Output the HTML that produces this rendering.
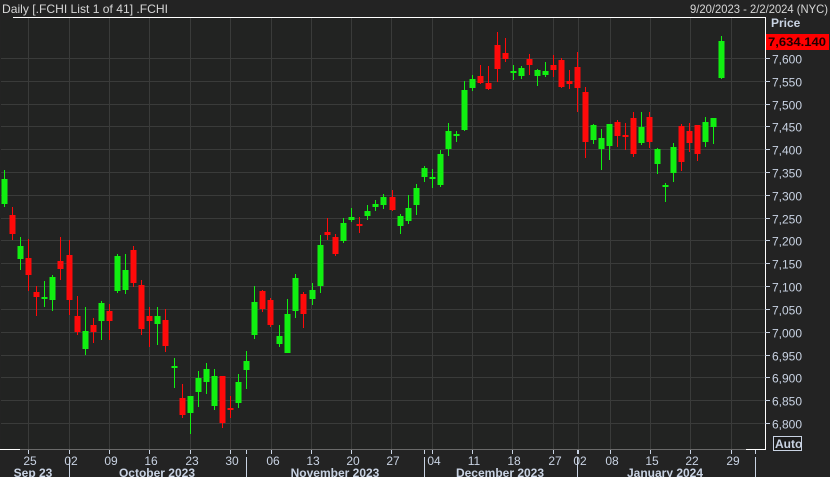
<!DOCTYPE html>
<html><head><meta charset="utf-8"><style>
html,body{margin:0;padding:0;background:#232323;width:830px;height:477px;overflow:hidden}
svg{display:block}
text{font-family:"Liberation Sans",sans-serif}
</style></head><body>
<svg id="s" width="830" height="477" xmlns="http://www.w3.org/2000/svg">
<rect x="0" y="0" width="830" height="477" fill="#232323"/>
<rect x="1" y="18" width="764" height="431" fill="#222322"/>
<g id="grid" stroke="#3a3b3a" stroke-width="1"></g>
<line x1="0" y1="449.5" x2="766" y2="449.5" stroke="#6a6a6a"/>
<line x1="13" y1="17.5" x2="766" y2="17.5" stroke="#ffffff"/>
<line x1="765.5" y1="17" x2="765.5" y2="450" stroke="#ffffff"/>
<line x1="0" y1="449.5" x2="20" y2="449.5" stroke="#ffffff"/>
<line x1="746" y1="449.5" x2="766" y2="449.5" stroke="#ffffff"/>
<g id="c"></g>
<g id="ax" fill="#c9d3e3" font-size="12"></g>
<text x="2" y="13" fill="#d6d6d6" font-size="12" textLength="166" lengthAdjust="spacingAndGlyphs">Daily [.FCHI List 1 of 41] .FCHI</text>
<text x="828" y="13" fill="#d6d6d6" font-size="12" text-anchor="end" textLength="138" lengthAdjust="spacingAndGlyphs">9/20/2023 - 2/2/2024 (NYC)</text>
<text x="771" y="27" fill="#c9d3e3" font-size="12" font-weight="bold">Price</text>
<rect x="766" y="34" width="63" height="16" fill="#ff0000"/>
<text x="768" y="46" fill="#200000" font-size="12" font-weight="bold" textLength="58" lengthAdjust="spacingAndGlyphs">7,634.140</text>
<rect x="773.5" y="436.5" width="28" height="14" fill="#1c1c1c" stroke="#c9d3e3"/>
<text x="775" y="448" fill="#c9d3e3" font-size="12" font-weight="bold">Auto</text>
</svg>
<script>
var ns="http://www.w3.org/2000/svg",s=document.getElementById('s');
function el(p,t,a,txt){var e=document.createElementNS(ns,t);for(var k in a)e.setAttribute(k,a[k]);if(txt)e.textContent=txt;document.getElementById(p).appendChild(e);return e;}
var g='grid',ax='ax';
for(var i=0;i<=16;i++){var p=7600-50*i;var y=Math.round(58+i*22.81)+0.5;
 el(g,'line',{x1:1,x2:765,y1:y,y2:y});
 el(ax,'line',{x1:765,x2:770,y1:y,y2:y,stroke:'#c9d3e3'});
 el(ax,'text',{x:772,y:y+5},p.toLocaleString('en-US'));}
var xt=[[28,'25'],[69,'02'],[109,'09'],[149,'16'],[190,'23'],[230,'30'],[271,'06'],[311,'13'],[351,'20'],[391,'27'],[432,'04'],[472,'11'],[512,'18'],[553,'27'],[578,'02'],[610,'08'],[650,'15'],[690,'22'],[731,'29']];
xt.forEach(function(t){el(g,'line',{x1:t[0]+.5,x2:t[0]+.5,y1:18,y2:449});
 el(ax,'line',{x1:t[0]+.5,x2:t[0]+.5,y1:450,y2:454,stroke:'#c9d3e3'});
 el(ax,'text',{x:t[0]+2,y:465,'text-anchor':'middle'},t[1]);});
[246,424,577,755].forEach(function(x){el(ax,'line',{x1:x+.5,x2:x+.5,y1:450,y2:454,stroke:'#c9d3e3'});el(ax,'line',{x1:x+.5,x2:x+.5,y1:457,y2:477,stroke:'#c9d3e3'});});
el(ax,'line',{x1:69.5,x2:69.5,y1:457,y2:477,stroke:'#c9d3e3'});
[[33,'Sep 23'],[157,'October 2023'],[335,'November 2023'],[500,'December 2023'],[665,'January 2024']].forEach(function(m){el(ax,'text',{x:m[0],y:477,'text-anchor':'middle','font-weight':'bold'},m[1]);});
var C=[[4,179,204,170,207,1],[12,215,234,207,240,0],[20,246,259,237,270,1],[28,258,275,239,291,0],[36,292,297,286,316,0],[44,297,299,281,307,1],[52,277,300,275,311,1],[60,261,269,237,280,0],[69,255,300,240,315,0],[77,316,332,296,335,0],[85,331,349,307,355,1],[93,325,332,318,343,0],[101,303,321,301,340,1],[109,311,321,304,340,0],[117,256,291,254,293,1],[125,270,290,254,294,1],[133,250,283,246,287,0],[141,285,329,280,335,0],[149,316,321,307,347,0],[157,316,324,307,345,1],[165,320,346,309,352,0],[174,366,368,358,388,1],[182,398,415,384,418,0],[190,396,413,396,434,1],[198,378,392,371,407,1],[206,369,382,363,394,1],[214,376,406,369,410,1],[222,376,423,376,428,0],[230,408,410,396,418,0],[238,382,403,374,408,1],[246,361,370,351,389,1],[254,302,335,286,339,1],[262,291,309,290,312,0],[270,300,325,298,327,0],[279,336,344,325,347,1],[287,314,353,299,353,1],[295,278,311,274,318,1],[303,294,314,292,328,0],[312,290,299,283,305,1],[320,245,286,235,293,1],[327,232,235,218,240,0],[335,237,254,234,256,0],[343,223,241,218,243,1],[351,217,220,208,222,1],[359,224,226,217,233,0],[367,211,216,205,220,1],[375,204,207,200,211,1],[383,197,205,194,209,1],[392,197,210,190,211,0],[400,216,226,214,234,1],[408,208,221,195,224,1],[416,188,205,184,215,1],[424,168,177,166,182,1],[432,177,179,169,188,1],[440,154,185,150,187,1],[448,131,149,123,156,1],[456,134,136,131,142,1],[464,90,130,81,131,1],[472,79,88,75,91,1],[480,76,83,65,84,0],[488,83,89,66,90,0],[497,45,69,32,82,0],[505,53,59,38,62,0],[513,71,73,65,80,1],[521,68,76,66,79,1],[529,59,65,54,75,0],[537,70,76,69,86,1],[545,71,75,62,77,1],[553,65,70,55,77,0],[561,60,87,58,88,0],[569,81,84,70,89,0],[577,67,88,52,112,0],[585,92,142,87,158,0],[593,125,140,124,144,1],[601,138,149,129,170,1],[609,124,146,124,160,1],[617,122,136,120,147,0],[625,135,137,123,150,0],[633,118,154,112,157,0],[641,127,143,112,145,1],[649,117,142,112,148,0],[657,149,164,148,174,1],[665,185,187,183,202,1],[673,147,173,143,182,1],[681,126,162,124,171,0],[689,131,143,123,152,0],[697,125,154,125,161,0],[705,122,142,117,147,1],[713,118,127,118,144,1],[721,41,78,36,79,1]];
C.forEach(function(c){var col=c[5]?'#11f011':'#ff0a0a';
 el('c','rect',{x:c[0],y:c[3],width:1,height:c[4]-c[3],fill:col});
 el('c','rect',{x:c[0]-2.5,y:c[1],width:6,height:Math.max(2,c[2]-c[1]),fill:col});});
</script>
</body></html>
